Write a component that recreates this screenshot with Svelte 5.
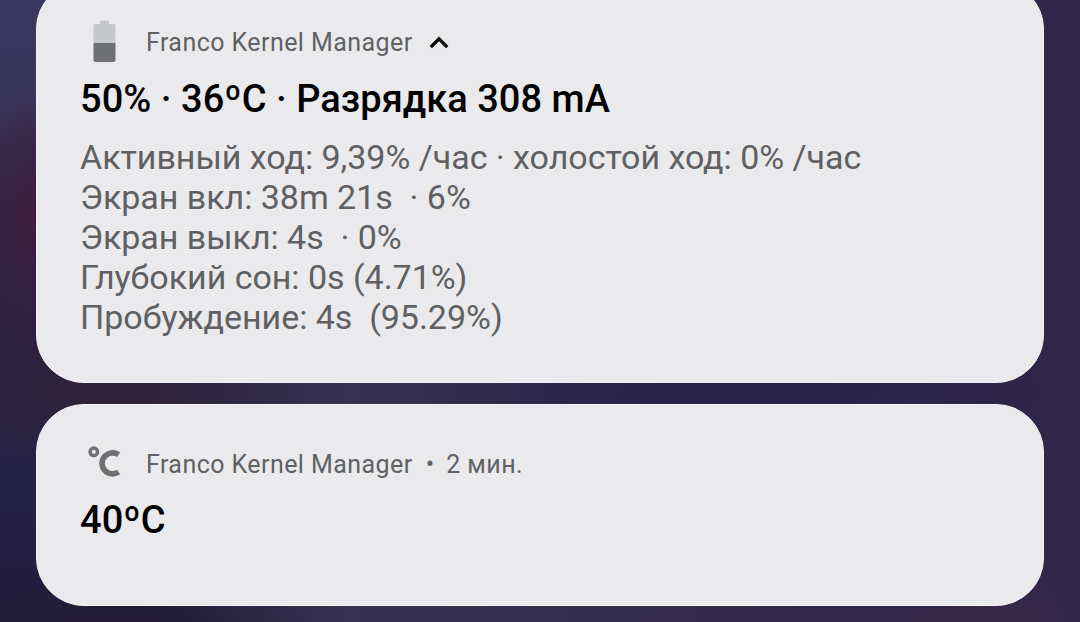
<script lang="ts">
	const details = [
		'Активный ход: 9,39% /час · холостой ход: 0% /час',
		'Экран вкл: 38m 21s  · 6%',
		'Экран выкл: 4s  · 0%',
		'Глубокий сон: 0s (4.71%)',
		'Пробуждение: 4s  (95.29%)'
	];
</script>

<main class="shade">
	<section class="card expanded">
		<header class="header">
			<svg class="icon" viewBox="0 0 50 50" aria-hidden="true">
				<path d="M20 2.5h9V6h4.5a2 2 0 0 1 2 2v17h-22V8a2 2 0 0 1 2-2H20z" fill="#c6c8c9" />
				<path d="M13.5 25h22v17a2 2 0 0 1-2 2h-18a2 2 0 0 1-2-2z" fill="#6e7072" />
			</svg>
			<span class="app">Franco Kernel Manager</span>
			<svg class="chevron" viewBox="0 0 20 14" aria-hidden="true">
				<path d="M1.8 11.1 10 2.9l8.2 8.200" fill="none" stroke="#050505" stroke-width="3.4" />
			</svg>
		</header>
		<h2 class="title">50% · 36ºC · Разрядка 308 mA</h2>
		<div class="details">
			{#each details as line}
				<p>{line}</p>
			{/each}
		</div>
	</section>

	<section class="card">
		<header class="header">
			<svg class="icon" viewBox="0 0 50 50" aria-hidden="true">
				<g fill="none" stroke="#6e7072">
					<circle cx="13.8" cy="11.8" r="3.8" stroke-width="3.4" />
					<path d="M38.6 14.8A10.5 10.5 0 1 0 38.6 32" stroke-width="5.6" />
				</g>
			</svg>
			<span class="app">Franco Kernel Manager</span>
			<span class="dot">•</span>
			<span class="time">2 мин.</span>
		</header>
		<h2 class="title">40ºC</h2>
	</section>
</main>

<style>
	:global(body) {
		margin: 0;
		overflow: hidden;
	}

	.shade {
		box-sizing: border-box;
		height: 622px;
		padding: 0 36px;
		overflow: hidden;
		display: flex;
		flex-direction: column;
		gap: 21px;
		font-family: Roboto, 'Noto Sans', sans-serif;
		background:
			radial-gradient(ellipse 60px 130px at 36px 215px, #3d1f3b 0%, transparent 100%),
			radial-gradient(ellipse 200px 80px at 110px 392px, #2d2338 20%, transparent 100%),
			radial-gradient(ellipse 340px 80px at 740px 392px, #272047 20%, transparent 100%),
			radial-gradient(ellipse 200px 40px at 110px 622px, #211b33 20%, transparent 100%),
			radial-gradient(ellipse 120px 60px at 980px 622px, #382a4a 0%, transparent 100%),
			linear-gradient(90deg, transparent 3%, #363152 32%, #342d50 60%, #30264a 100%),
			linear-gradient(#3b3860 0%, #38345a 17%, #33254a 33%, #2c2040 52%, #27224a 65%, #211d3e 100%);
	}

	.card {
		box-sizing: border-box;
		flex: none;
		height: 202px;
		padding: 35px 44px 0;
		border: 1px solid #f3f3f6;
		border-radius: 48px;
		background: #eaeaec;
	}

	.expanded {
		height: 402px;
		margin-top: -19px;
		padding-top: 36px;
	}

	.header {
		display: flex;
		align-items: center;
		height: 50px;
		color: #606163;
		font-size: 25px;
		line-height: 50px;
		white-space: nowrap;
	}

	.icon {
		flex: none;
		width: 50px;
		height: 50px;
		margin-left: -1px;
	}

	.app {
		margin-left: 16px;
		letter-spacing: 0.44px;
	}

	.chevron {
		width: 20px;
		height: 14px;
		margin-left: 16px;
	}

	.dot {
		margin-left: 13px;
	}

	.time {
		margin-left: 12px;
		letter-spacing: 0.44px;
	}

	.title {
		margin: 7px 0 0 -1px;
		color: #020202;
		font-size: 38px;
		font-weight: 500;
		line-height: 46px;
		letter-spacing: 0.03px;
		white-space: nowrap;
	}

	.expanded .title {
		margin-top: 8px;
	}

	.details {
		margin: 15px 0 0 -1px;
		color: #606062;
		font-size: 34px;
		line-height: 40px;
		letter-spacing: -0.03px;
	}

	.details p {
		margin: 0;
		white-space: pre;
	}
</style>
